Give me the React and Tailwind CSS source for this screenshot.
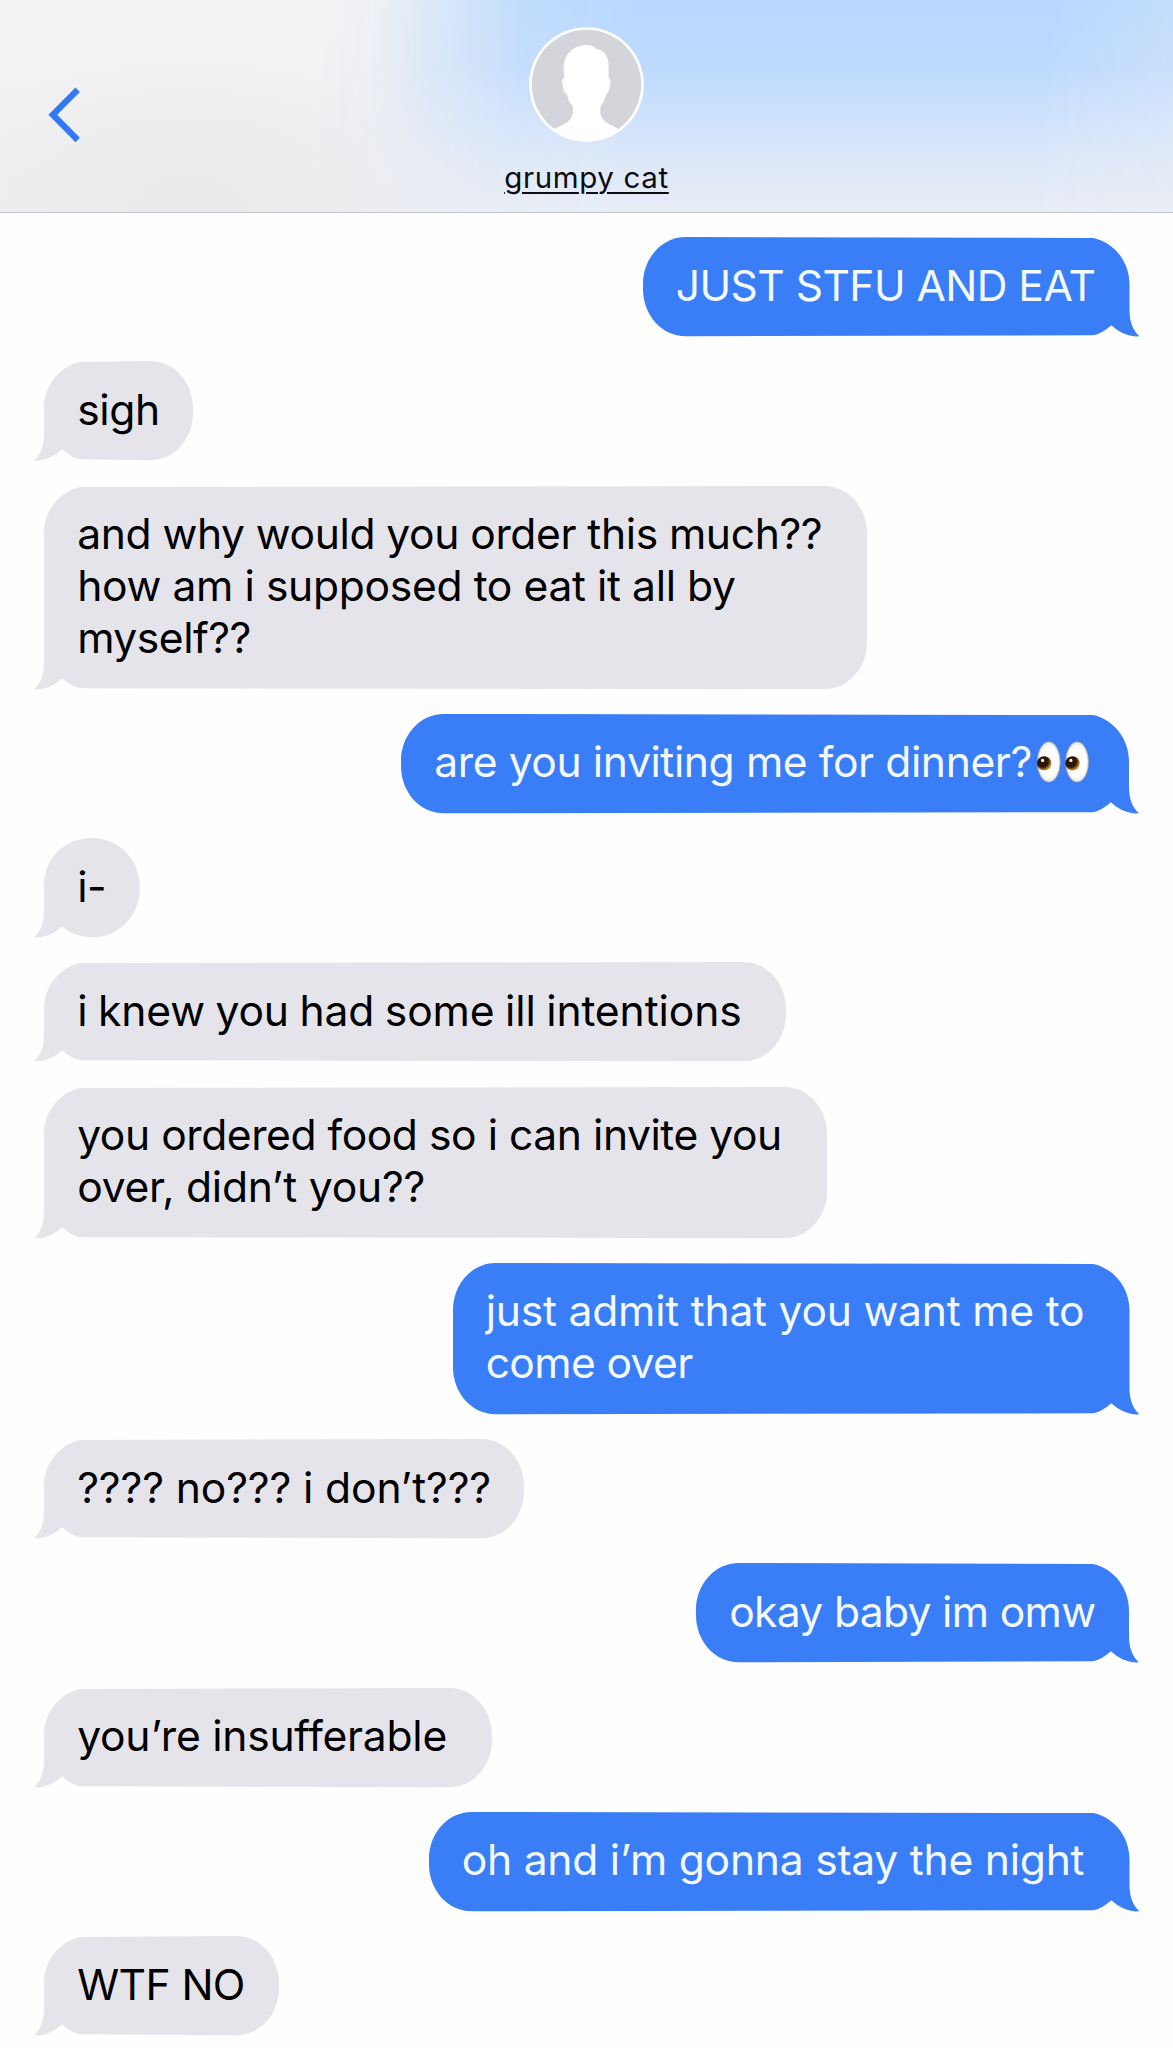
import React from 'react';

const LINE = 52;
const PAD = 47.25;

const messages = [
  { sent: true, width: 486.5, lines: [{ text: 'JUST STFU AND EAT', cls: 'tracking-[-0.57px]' }] },
  { width: 149, lines: [{ text: 'sigh', cls: 'tracking-[-0.4px]' }] },
  {
    width: 823,
    lines: [
      { text: 'and why would you order this much??', cls: 'tracking-[-0.38px] [word-spacing:-0.4px]' },
      { text: 'how am i supposed to eat it all by', cls: 'tracking-[-0.3px] [word-spacing:-0.3px]' },
      { text: 'myself??', cls: 'tracking-[-0.5px]' },
    ],
  },
  { sent: true, width: 728, eyes: true, lines: [{ text: 'are you inviting me for dinner?', cls: 'tracking-[-0.4px]' }] },
  { width: 96, lines: [{ text: 'i-', cls: 'tracking-[-0.5px]' }] },
  { width: 742, lines: [{ text: 'i knew you had some ill intentions', cls: 'tracking-[-0.1px] [word-spacing:-1.4px]' }] },
  {
    width: 783,
    lines: [
      { text: 'you ordered food so i can invite you', cls: 'tracking-[-0.45px]' },
      { text: 'over, didn’t you??', cls: 'tracking-[-0.24px]' },
    ],
  },
  {
    sent: true,
    width: 676.5,
    lines: [
      { text: 'just admit that you want me to', cls: 'tracking-[-0.22px]' },
      { text: 'come over', cls: 'tracking-[-0.65px]' },
    ],
  },
  { width: 480, lines: [{ text: '???? no??? i don’t???', cls: 'tracking-[-0.12px]' }] },
  { sent: true, width: 433, lines: [{ text: 'okay baby im omw', cls: 'tracking-[-0.68px]' }] },
  { width: 448, lines: [{ text: 'you’re insufferable', cls: 'tracking-[-0.25px]' }] },
  { sent: true, width: 700.5, lines: [{ text: 'oh and i’m gonna stay the night', cls: 'tracking-[-0.24px]' }] },
  { width: 235, lines: [{ text: 'WTF NO', cls: 'tracking-[-0.6px]' }] },
];

// outgoing outline, tail at the bottom right; incoming bubbles mirror it
function bubblePath(w, h) {
  const tail = `L${w} ${h - 26} C${w} ${h - 14} ${w + 4} ${h - 5} ${w + 10} ${h} C${w} ${h + 1} ${w - 11} ${h - 4} ${w - 18} ${h - 11}`;
  if (w < 100) {
    return `M${w / 2} 0 C${w - 21} 0 ${w} 20 ${w} 48 ${tail} C${w - 26} ${h - 4} ${w - 37} ${h} ${w / 2} ${h} C21 ${h} 0 ${h - 22} 0 ${h / 2} C0 22 21 0 ${w / 2} 0Z`;
  }
  return `M43 0 L${w - 36} 1 C${w - 14} 6 ${w} 26 ${w} 47 ${tail} C${w - 24} ${h - 6} ${w - 30} ${h - 2} ${w - 36} ${h - 1} L43 ${h} C18 ${h} 0 ${h - 22} 0 ${h - 47} L0 47 C0 22 18 0 43 0Z`;
}

function Eyes() {
  return (
    <svg role="img" aria-label="👀" viewBox="0 0 52 42" className="ml-[5px] mt-[5px] h-[42px] w-[52px] shrink-0">
      <defs>
        <radialGradient id="white" cx="50%" cy="50%" r="50%">
          <stop offset="78%" stopColor="#ffffff" />
          <stop offset="100%" stopColor="#dedede" />
        </radialGradient>
        <radialGradient id="iris" cx="38%" cy="36%" r="64%">
          <stop offset="62%" stopColor="#2e1605" />
          <stop offset="78%" stopColor="#7a5218" />
          <stop offset="100%" stopColor="#c49a45" />
        </radialGradient>
      </defs>
      {[0, 28.3].map((x) => (
        <g key={x} transform={`translate(${x} 0)`}>
          <ellipse cx="11.8" cy="21" rx="11.5" ry="20.2" fill="url(#white)" stroke="#a69d8e" strokeWidth="0.6" />
          <circle cx="7.2" cy="22.4" r="7.2" fill="url(#iris)" />
          <circle cx="5.6" cy="19.4" r="1.6" fill="#ffffff" />
        </g>
      ))}
    </svg>
  );
}

function Bubble({ msg }) {
  const h = PAD + LINE * msg.lines.length;
  return (
    <div
      className={`relative shrink-0 ${msg.sent ? 'self-end text-[#f3f9ff]' : 'self-start text-black'}`}
      style={{ width: msg.width, height: h }}
    >
      <svg
        aria-hidden="true"
        className={`absolute inset-0 h-full w-full overflow-visible ${msg.sent ? '' : '-scale-x-100'}`}
      >
        <path d={bubblePath(msg.width, h)} fill={msg.sent ? '#397ef6' : '#e5e4ea'} />
      </svg>
      <div className="relative flex pt-[22.7px] pl-[33.2px]">
        <div>
          {msg.lines.map((line) => (
            <p key={line.text} className={`leading-[52px] whitespace-nowrap ${line.cls}`}>{line.text}</p>
          ))}
        </div>
        {msg.eyes && <Eyes />}
      </div>
    </div>
  );
}

function Avatar() {
  return (
    <svg viewBox="88 51 345 345" className="h-[115px] w-[115px]">
      <defs>
        <clipPath id="avatar"><circle cx="260.5" cy="223.5" r="168" /></clipPath>
      </defs>
      <circle cx="260.5" cy="223.5" r="172" fill="#ffffff" />
      <circle cx="260.5" cy="223.5" r="164" fill="#d4d5da" />
      <path
        clipPath="url(#avatar)"
        fill="#ffffff"
        d="M262 105 C275 105 286 109 291 118 C313 121 327 138 327 166 L327 205 C334 206 333 216 330 230 C328 243 326 249 320 250 C317 268 311 280 303 288 C301 308 302 316 308 325 C317 340 336 346 358 358 L358 400 L163 400 L163 358 C185 346 204 340 213 325 C219 316 221 308 219 288 C210 280 204 267 201 250 C194 249 192 243 190 230 C186 216 186 206 193 205 L192 174 C192 132 222 105 262 105Z"
      />
    </svg>
  );
}

export default function App() {
  return (
    <div className="h-[2048px] w-[1173px] overflow-hidden bg-[#fefefe] font-['Inter',sans-serif]">
      <header className="relative flex h-[213px] flex-col items-center overflow-hidden border-b border-[#c6c8ce] bg-[radial-gradient(ellipse_260px_150px_at_190px_205px,#eaeaec_0%,rgba(234,234,236,0)_100%),linear-gradient(180deg,#f3f3f4_0%,#efeff1_100%)] pt-[27px]">
        <div className="absolute inset-0 bg-[linear-gradient(180deg,#b7d8ff_0%,#bedafe_32%,#cfe2fc_56%,#dde8f8_76%,#e8edf6_100%)] [mask-image:linear-gradient(96deg,transparent_27%,rgba(0,0,0,0.1)_32%,rgba(0,0,0,0.45)_37%,rgba(0,0,0,0.85)_44%,black_54%,black_88%,rgba(0,0,0,0.75)_100%)]" />
        <svg viewBox="0 0 40 60" className="absolute top-[85px] left-[45px] h-[60px] w-[40px]" fill="none" stroke="#3478f6" strokeWidth="6.2">
          <path d="M32.7 4.7 L7.8 29.8 L32.7 55" />
        </svg>
        <div className="relative flex flex-col items-center">
          <Avatar />
          <p className="mt-[16.5px] text-[29.5px] leading-9 tracking-[0.65px] whitespace-nowrap text-[#0b0d12] underline decoration-2 underline-offset-[4px]">grumpy cat</p>
        </div>
      </header>

      <main className="flex flex-col gap-[25px] pt-[24px] pr-[44px] pl-[44px] text-[42.6px]">
        {messages.map((msg) => (
          <Bubble key={msg.lines[0].text} msg={msg} />
        ))}
      </main>
    </div>
  );
}
